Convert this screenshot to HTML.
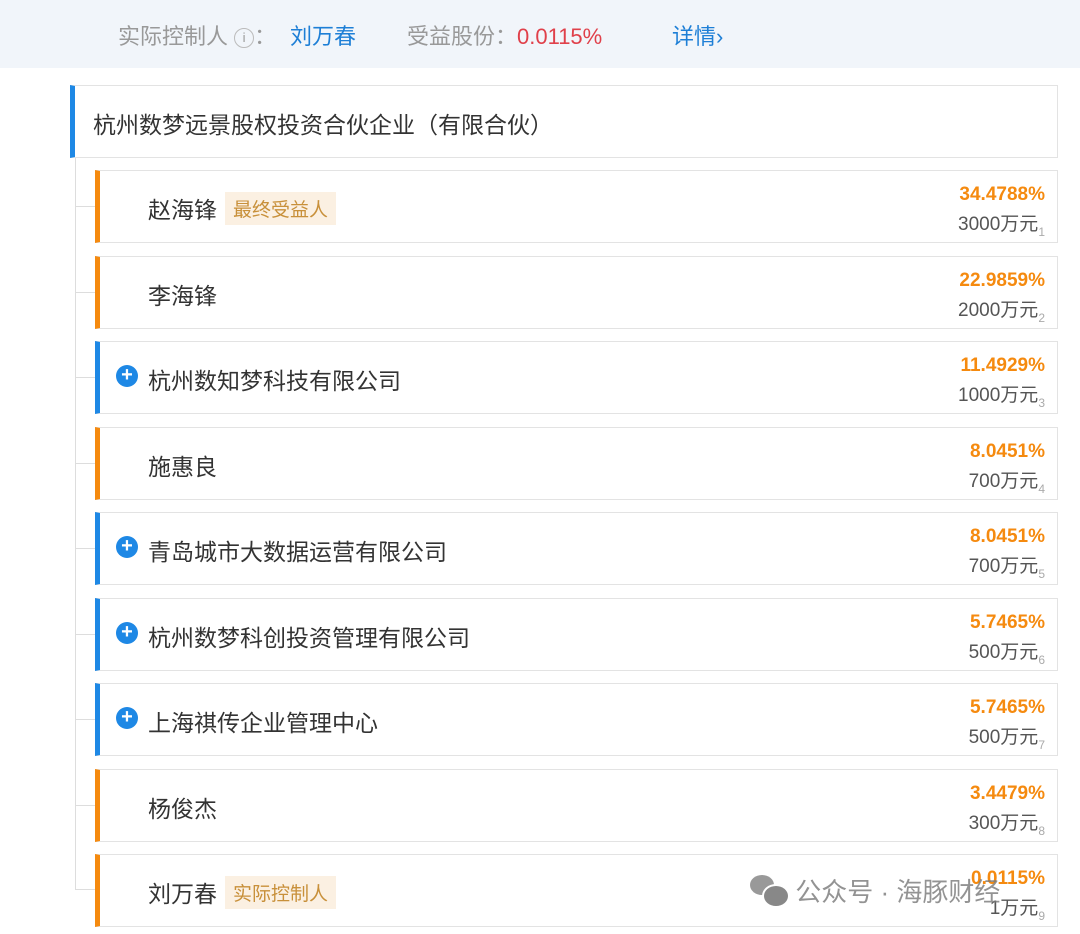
<!DOCTYPE html><html><head><meta charset="utf-8"><style>
body{margin:0;width:1080px;height:934px;background:#fff;font-family:"Liberation Sans","Noto Sans CJK SC",sans-serif;position:relative;overflow:hidden}
.top{position:absolute;left:0;top:0;width:1080px;height:68px;background:#f1f5fa;font-size:22px;color:#999}
.top span{position:absolute;top:19px}
.box{position:absolute;background:#fff;border:1px solid #e3e3e3;box-sizing:border-box;border-left-width:5px}
.main{left:70px;top:85px;width:988px;height:73px;border-left-color:#1e88e5}
.main div{position:absolute;left:18px;top:20px;font-size:23px;color:#333}
.row{left:95px;width:963px;height:73px}
.o{border-left-color:#f58a0f}.b{border-left-color:#1e88e5}
.name{position:absolute;left:48px;top:20px;font-size:23px;color:#333}
.tag{display:inline-block;background:#fbf0e2;color:#c8903a;font-size:19px;padding:3px 8px;margin-left:8px;vertical-align:2px}
.plus{position:absolute;left:16px;top:23px;width:22px;height:22px;border-radius:50%;background:#1e88e5;color:#fff;font-size:20px;line-height:21px;text-align:center;font-weight:bold}
.pct{position:absolute;right:12px;top:13px;font-size:19px;font-weight:bold;color:#f58a0f}
.amt{position:absolute;right:12px;top:38px;font-size:19px;color:#555}
.amt sub{font-size:12px;color:#aaa;vertical-align:-6px}
.vl{position:absolute;left:75px;top:158px;width:1px;height:732px;background:#ddd}
.hl{position:absolute;left:75px;width:20px;height:1px;background:#ddd}
</style></head><body>
<div class="top"><span style="left:118px">实际控制人 <span style="position:static;display:inline-block;width:18px;height:18px;border:1px solid #bbb;border-radius:50%;font-size:13px;text-align:center;line-height:18px;vertical-align:2px">i</span>：</span><span style="left:290px;color:#1e7fd6">刘万春</span><span style="left:407px">受益股份：<span style="position:static;color:#e0404a">0.0115%</span></span><span style="left:672px;color:#1e7fd6">详情›</span></div>
<div class="box main"><div>杭州数梦远景股权投资合伙企业（有限合伙）</div></div>
<div class="vl"></div>
<div class="hl" style="top:206px"></div><div class="hl" style="top:292px"></div><div class="hl" style="top:377px"></div><div class="hl" style="top:463px"></div><div class="hl" style="top:548px"></div><div class="hl" style="top:634px"></div><div class="hl" style="top:719px"></div><div class="hl" style="top:805px"></div><div class="hl" style="top:889px"></div>
<div class="box row o" style="top:170px"><div class="name">赵海锋<span class="tag">最终受益人</span></div><div class="pct">34.4788%</div><div class="amt">3000万元<sub>1</sub></div></div>
<div class="box row o" style="top:256px"><div class="name">李海锋</div><div class="pct">22.9859%</div><div class="amt">2000万元<sub>2</sub></div></div>
<div class="box row b" style="top:341px"><div class="plus">+</div><div class="name">杭州数知梦科技有限公司</div><div class="pct">11.4929%</div><div class="amt">1000万元<sub>3</sub></div></div>
<div class="box row o" style="top:427px"><div class="name">施惠良</div><div class="pct">8.0451%</div><div class="amt">700万元<sub>4</sub></div></div>
<div class="box row b" style="top:512px"><div class="plus">+</div><div class="name">青岛城市大数据运营有限公司</div><div class="pct">8.0451%</div><div class="amt">700万元<sub>5</sub></div></div>
<div class="box row b" style="top:598px"><div class="plus">+</div><div class="name">杭州数梦科创投资管理有限公司</div><div class="pct">5.7465%</div><div class="amt">500万元<sub>6</sub></div></div>
<div class="box row b" style="top:683px"><div class="plus">+</div><div class="name">上海祺传企业管理中心</div><div class="pct">5.7465%</div><div class="amt">500万元<sub>7</sub></div></div>
<div class="box row o" style="top:769px"><div class="name">杨俊杰</div><div class="pct">3.4479%</div><div class="amt">300万元<sub>8</sub></div></div>
<div class="box row o" style="top:854px"><div class="name">刘万春<span class="tag">实际控制人</span></div><div class="pct">0.0115%</div><div class="amt">1万元<sub>9</sub></div></div>
<div style="position:absolute;left:750px;top:872px;font-size:26px;color:rgba(120,120,120,.8)"><span style="display:inline-block;width:38px;height:30px;position:relative;vertical-align:-4px"><span style="position:absolute;left:0;top:0;width:24px;height:20px;border-radius:50%;background:#999"></span><span style="position:absolute;left:12px;top:9px;width:24px;height:20px;border-radius:50%;background:#888;border:2px solid #fff"></span></span> 公众号 · 海豚财经</div>
</body></html>
